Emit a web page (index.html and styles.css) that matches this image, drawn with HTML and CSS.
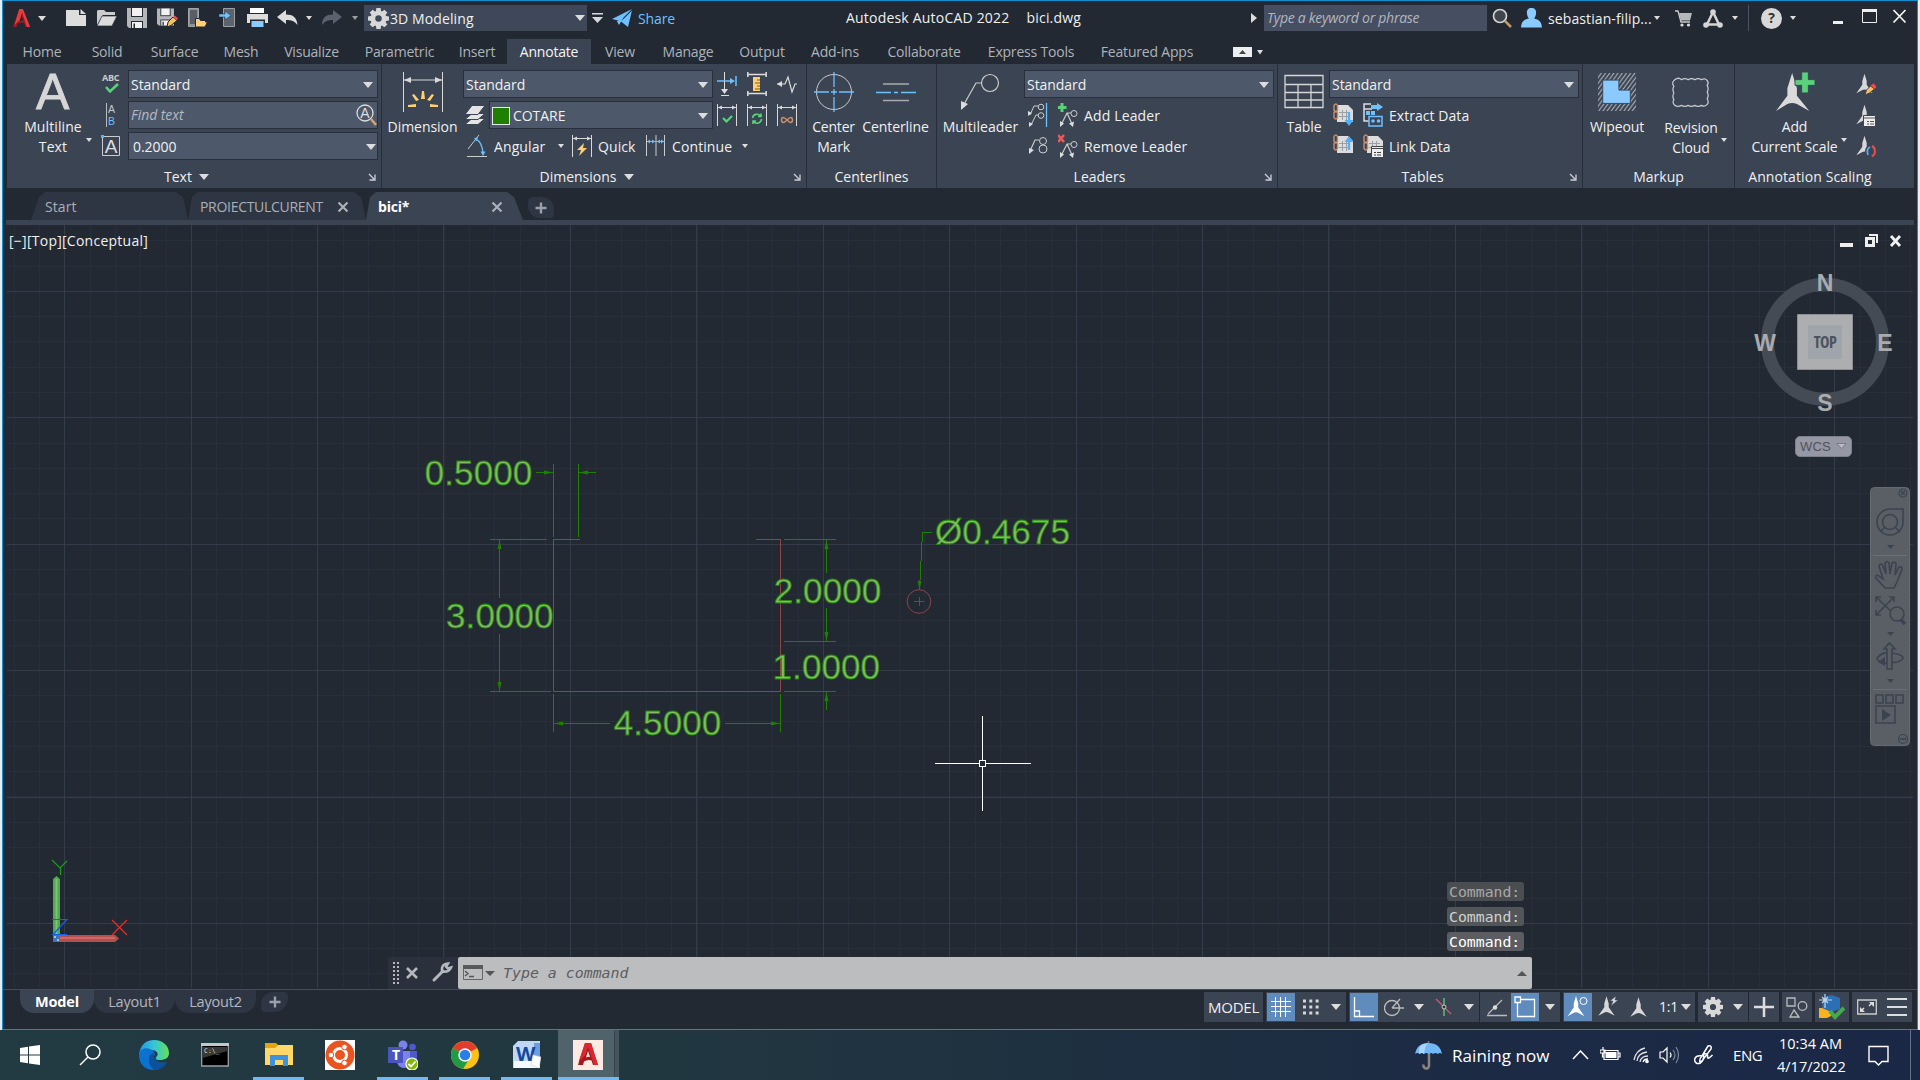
FILE: index.html
```html
<!DOCTYPE html>
<html lang="en">
<head>
<meta charset="utf-8">
<title>Autodesk AutoCAD 2022 - bici.dwg</title>
<link rel="stylesheet" href="styles.css">
</head>
<body>
<svg width="0" height="0" class="defs">
  <defs>
    <symbol id="gear" viewBox="0 0 20 20"><g fill="currentColor"><path fill-rule="evenodd" d="M10 2.5a7.5 7.5 0 1 0 0 15a7.5 7.5 0 0 0 0-15zm0 4.4a3.1 3.1 0 1 1 0 6.200a3.100 3.100 0 0 1 0-6.200z"/><path d="M8 0h4l.6 4h-5.200zM8 20h4l.6-4h-5.200zM0 8v4l4 .6v-5.200zM20 8v4l-4 .6v-5.200zM1.600 4.400l2.800-2.800l3.200 2.400l-3.600 3.600zM18.400 4.400l-2.800-2.800l-3.200 2.400l3.600 3.600zM1.600 15.600l2.800 2.800l3.200-2.400l-3.600-3.600zM18.400 15.600l-2.800 2.800l-3.200-2.400l3.600-3.600z"/></g></symbol>
    <symbol id="scale" viewBox="0 0 20 24"><path fill="currentColor" d="M10 0l2.600 8.500v4.500l7 10l-6.600-3.700c-1.800-1-4.200-1-6 0L.4 23l7-10V8.500z"/></symbol>
    <symbol id="floppy" viewBox="0 0 20 20"><path fill="#b4b6b9" d="M0 0h20v20H2l-2-2z"/><path fill="#222933" d="M4 0h12v9H4z"/><path fill="#f2f2f2" d="M5 0h10v8H5z"/><path fill="#222933" d="M4 13h12v7H4z"/><path fill="#f2f2f2" d="M5 14h10v6H5z"/><path fill="#222933" d="M6.500 15.500h1.500V20H6.500z"/></symbol>
    <symbol id="dimframe" viewBox="0 0 20 24"><path fill="none" stroke="#d8d8d8" d="M.5 1v22M19.500 1v22M1 4.500h18"/><path fill="#d8d8d8" d="M1 4.500l4-2v4zM19 4.500l-4-2v4z"/></symbol>
    <symbol id="sheet" viewBox="0 0 20 22"><path fill="#ddd" d="M4 2h11l5 5v12H4z"/><path stroke="#9aa0a6" fill="none" d="M6 9.500h11M6 13.500h11M9.500 7v10M13.500 7v10"/><path fill="none" stroke="#c98f6a" stroke-width="1.400" d="M1 2.500q2-3 3.500 0v5q-1.500 3-3.500 0zM1 9.500q2-3 3.500 0v5q-1.500 3-3.500 0z"/></symbol>
    <symbol id="launch" viewBox="0 0 8 8"><path fill="none" stroke="#ccd0d6" stroke-width="1.300" d="M1 1l5 5M7 1.500v5.500h-5.500"/></symbol>
    <symbol id="close" viewBox="0 0 12 12"><path fill="none" stroke="currentColor" stroke-width="2.200" d="M1.500 1.500l9 9M10.500 1.500l-9 9"/></symbol>
  </defs>
</svg>

<div class="app">
  <header class="titlebar">
    <div class="quick">
      <svg width="18" height="22" viewBox="0 0 20 22"><path fill="#a3191f" d="M0 21L7 1h4l8 20h-5l-1.500-4.500q-4-1.500-7.500 1L4 21z"/><path fill="#e0403f" d="M7 1h4l8 20h-3.500L10 4.500L7.500 13l-6 6z"/><path fill="#222933" d="M9.500 8l2 6q-2-.6-4 .6z"/></svg>
      <i class="caret"></i>
      <svg width="21" height="18" viewBox="0 0 21 18"><path fill="#ddd" d="M0 1h13v5h7v11H0z"/><path fill="#ddd" d="M14.500 0l5.500 5h-5.500z"/></svg>
      <svg width="21" height="18" viewBox="0 0 21 18"><path fill="#ccc" d="M0 16V2l1-1h6l2 2h9v3H6z"/><path fill="#ddd" stroke="#222933" stroke-width=".7" d="M5 7h15l-5 10H0z"/></svg>
      <svg width="20" height="20"><use href="#floppy"/></svg>
      <svg width="21" height="20" viewBox="0 0 21 20"><svg width="17" height="18"><use href="#floppy"/></svg><path fill="#f7c05e" stroke="#222933" d="M10 19l1-5l5-5l4 3.500l-6 5z"/><path fill="#ee4b4b" d="M16 9l2-1.500l3 3l-1.500 2z"/></svg>
      <svg width="19" height="20" viewBox="0 0 19 20"><path fill="#8d9198" stroke="#a0a3a8" d="M.5.5h10v18h-10z"/><path fill="#5a5e66" d="M2 2h7v14H2z"/><path fill="#ffcf78" stroke="#222933" d="M7.500 19V10.500h4l1 2h5V14h2l-2.500 5z"/></svg>
      <svg width="19" height="20" viewBox="0 0 19 20"><path fill="#5e626a" stroke="#9b9fa5" d="M4.500.5h11v18h-11z"/><path fill="#6ec1ff" stroke="#222933" stroke-width=".5" d="M0 6h6V3l6 4.500l-6 4.500V9H0z"/></svg>
      <svg width="21" height="20" viewBox="0 0 21 20"><path fill="#fff" d="M3 0h14v5H3z"/><path fill="#ddd" d="M0 6h21v9H0z"/><path fill="#222933" d="M3 11.500h15V20H3z"/><path fill="#8acaff" d="M4.500 13h12v6h-12z"/></svg>
      <svg width="21" height="16" viewBox="0 0 21 16"><path fill="#ddd" d="M0 7l9-7v4.500c7 0 11 3 11.500 10.500c-3-4-6-5-11.500-5V14z"/></svg>
      <i class="caret sm"></i>
      <svg width="21" height="16" viewBox="0 0 21 16"><path fill="#5b626d" d="M20 7L11 0v4.500C4 4.500 0 7.500 0 15c3-4 6-5 11-5v4z"/></svg>
      <i class="caret sm dim"></i>
    </div>
    <div class="workspace"><svg width="21" height="21" class="lt"><use href="#gear"/></svg><span>3D Modeling</span><i class="caret wide"></i></div>
    <div class="share"><svg width="11" height="12" viewBox="0 0 11 12"><path fill="#d5d8dc" d="M0 1h11v1.500H0zM0 5h11L5.500 11z"/></svg><svg width="21" height="18" viewBox="0 0 21 18"><path fill="#6ec1ff" d="M0 10L20 0L8 12zM9 12.500L20 1.500L16 18zM5 12.500L15 3L7 16z"/></svg><span>Share</span></div>
    <div class="doctitle"><span>Autodesk AutoCAD 2022</span><span>bici.dwg</span></div>
    <svg class="expand" width="6" height="10" viewBox="0 0 6 10"><path fill="#ddd" d="M0 0l6 5l-6 5z"/></svg>
    <div class="search">Type a keyword or phrase</div>
    <div class="account">
      <svg width="21" height="20" viewBox="0 0 21 20"><circle cx="8" cy="8" r="6.500" fill="#40444d" stroke="#d3d3d3" stroke-width="1.700"/><path stroke="#c79a63" stroke-width="2.500" d="M13 13l6 6"/></svg>
      <svg width="21" height="20" viewBox="0 0 21 20"><path fill="#8acaff" d="M10.500 0c4 0 5 3 4.500 6c-.4 2-1 3.500-2 4.500c5 1 7.500 3 8 9H0c.5-6 3-8 8-9C7 9.500 6.400 8 6 6c-.5-3 .5-6 4.500-6z"/></svg>
      <span>sebastian-filip...</span><i class="caret sm"></i>
      <svg width="17" height="17" viewBox="0 0 17 17"><path fill="none" stroke="#ccc" stroke-width="1.300" d="M0 1h3l3 11h9"/><path fill="#b5b7ba" d="M4 3h13l-2 7.500H6z"/><circle cx="7" cy="15" r="1.600" fill="#ddd"/><circle cx="13.500" cy="15" r="1.600" fill="#ddd"/></svg>
      <svg width="20" height="19" viewBox="0 0 20 19"><path fill="none" stroke="#d5d5d5" stroke-width="2.500" stroke-linejoin="round" d="M10 3L4 15.500h12z"/><circle cx="10" cy="3" r="2.800" fill="#d5d5d5"/><circle cx="3" cy="16" r="2.800" fill="#d5d5d5"/><circle cx="17" cy="16" r="2.800" fill="#d5d5d5"/></svg>
      <i class="caret sm"></i><b class="bar"></b>
      <span class="help">?</span><i class="caret sm"></i>
    </div>
    <svg class="winbtns" width="78" height="18" viewBox="0 0 78 18"><path fill="#eee" d="M0 12h10v3H0z"/><path fill="none" stroke="#eee" d="M29.500 1.500h14v12h-14z"/><path fill="#eee" d="M29 0h15v3H29z"/><path fill="none" stroke="#f2f2f2" stroke-width="1.800" d="M60.500 1l12 12.500M72.500 1l-12 12.500"/></svg>
  </header>

  <nav class="ribbontabs">
    <span>Home</span><span>Solid</span><span>Surface</span><span>Mesh</span><span>Visualize</span><span>Parametric</span><span>Insert</span><span class="on">Annotate</span><span>View</span><span>Manage</span><span>Output</span><span>Add-ins</span><span>Collaborate</span><span>Express Tools</span><span>Featured Apps</span>
    <svg width="38" height="12" viewBox="0 0 38 12"><path fill="#eceded" d="M5 1h19v10H5z"/><path fill="#444" d="M11 8l3.500-4L18 8z"/><path fill="#ddd" d="M29 4h6l-3 4.500z"/></svg>
  </nav>

  <section class="ribbon">
    <div class="panel p-text">
      <div class="work">
        <button class="big"><svg width="34" height="38" viewBox="0 0 34 38"><text x="0" y="37" class="mtext">A</text></svg><span>Multiline<br>Text</span><i class="caret sm"></i></button>
        <div class="rows">
          <div class="row"><svg width="20" height="24" viewBox="0 0 20 24"><text x="1" y="9" class="abc">ABC</text><path fill="none" stroke="#5ad27c" stroke-width="2.600" d="M5 15l4 4.500l8-7.500"/></svg><div class="combo">Standard<i class="caret wide"></i></div></div>
          <div class="row"><svg width="20" height="24" viewBox="0 0 20 24"><path stroke="#bbb" d="M5.500 0v24"/><text x="7" y="9.800" class="ab">A</text><text x="7" y="21.500" class="ab blue">B</text></svg><div class="combo find">Find text<svg width="21" height="24" viewBox="0 0 21 24"><circle cx="9" cy="10" r="8" fill="none" stroke="#ddd" stroke-width="1.300"/><path stroke="#d6a468" stroke-width="2.600" d="M15 16l5 6"/><text x="4.300" y="14.800" class="fa">A</text></svg></div></div>
          <div class="row"><svg width="20" height="24" viewBox="0 0 20 24"><path fill="none" stroke="#ccc" d="M1.500 2.500h17v19h-17z"/><path fill="#58b2ff" d="M0 1h3v3H0z"/><text x="3.700" y="18.500" class="boxa">A</text></svg><div class="combo num">0.2000<i class="caret wide"></i></div></div>
        </div>
      </div>
      <footer>Text<i class="caret wide"></i><svg width="8" height="8"><use href="#launch"/></svg></footer>
    </div>

    <div class="panel p-dim">
      <div class="work">
        <button class="big"><svg width="40" height="40" viewBox="0 0 40 40"><path fill="none" stroke="#d8d8d8" d="M.5 0v40M39.500 0v40M1 8h38"/><path fill="#d8d8d8" d="M1 8l7-3v6zM39 8l-7-3v6z"/><path fill="#ffcf70" d="M18 27l1-8h2l1 8zM13 29l-4-6l2-1l5 6zM27 29l4-6l-2-1l-5 6zM13 35H5v-2l8-1zM27 35h8v-2l-8-1z"/></svg><span>Dimension</span></button>
        <div class="rows">
          <div class="row"><div class="combo">Standard<i class="caret wide"></i></div>
            <svg width="20" height="24" viewBox="0 0 20 24"><path stroke="#ddd" d="M7.500 0v20M4 23.500h8"/><path fill="#ddd" d="M7.500 22l-3.500-5h7z"/><path stroke="#6ec1ff" stroke-width="1.500" d="M0 9h16M19 4v10"/><path fill="#6ec1ff" d="M18 9l-5-3v6z"/></svg>
            <svg width="20" height="24" viewBox="0 0 20 24"><path stroke="#ddd" stroke-width="1.500" d="M1 2.500h18M1 21.500h18M.8 0v5M19.200 0v5M.8 19v5M19.200 19v5"/><path fill="#ffcf70" d="M6 5h7v14H6z"/><path stroke="#765d2d" d="M10 8h3M8 11h5M10 14h3M8 17h5"/></svg>
            <svg width="20" height="24" viewBox="0 0 20 24"><path fill="none" stroke="#ddd" stroke-width="1.200" d="M0 12h8l3-7l4 15l3-8h2"/><path fill="#ddd" d="M0 12l5-3v6z"/></svg>
          </div>
          <div class="row"><svg class="lay" width="20" height="22" viewBox="0 0 20 22"><g fill="#e4e4e4" stroke="#3b4453"><path d="M0 20.500l7-6h13l-7 6z"/><path d="M0 15.500l7-6h13l-7 6z"/><path d="M0 10.500l7-9h13l-7 9z"/></g></svg><div class="combo layer"><b class="swatch"></b>COTARE<i class="caret wide"></i></div>
            <svg width="20" height="24" viewBox="0 0 20 24"><use href="#dimframe"/><path fill="none" stroke="#5ad27c" stroke-width="2.200" d="M6 15l3.500 3.500L15 13"/></svg>
            <svg width="20" height="24" viewBox="0 0 20 24"><use href="#dimframe"/><path fill="none" stroke="#5ad27c" stroke-width="1.600" d="M5.500 15a4.500 4.500 0 0 1 8-2M14.500 16a4.500 4.500 0 0 1-8 2.500M14 10.500v3h-3M6 21v-3h3"/></svg>
            <svg width="20" height="24" viewBox="0 0 20 24"><use href="#dimframe"/><path fill="none" stroke="#c98f6a" stroke-width="1.600" d="M10 17q-5-5-5.500 0q.5 5 5.500 0q5-5 5.500 0q-.5 5-5.500 0"/></svg>
          </div>
          <div class="row labels"><svg width="20" height="24" viewBox="0 0 20 24"><path fill="none" stroke="#ccc" d="M12 1L1 15M0 22.500h20"/><path fill="none" stroke="#6ec1ff" stroke-width="1.300" d="M9 5q6 3 7 14"/><path fill="#6ec1ff" d="M16 22l-2.500-4.500h5zM7 4l4-.5l-1.500 4z"/></svg><span>Angular</span><i class="caret sm"></i><svg width="20" height="24" viewBox="0 0 20 24"><use href="#dimframe"/><path fill="#ffcf70" d="M12 9l-7 7h4l-2 6l8-8h-4z"/></svg><span>Quick</span><svg width="20" height="24" viewBox="0 0 20 24"><path stroke="#ccc" d="M.5 1v21M10 1v21M18.500 1v21"/><path stroke="#6ec1ff" d="M1 7.500h18"/><path fill="#6ec1ff" d="M1 7.500l3-2v4zM9 7.500l-3-2v4zM11 7.500l3-2v4zM18 7.500l-3-2v4z"/></svg><span>Continue</span><i class="caret sm"></i></div>
        </div>
      </div>
      <footer>Dimensions<i class="caret wide"></i><svg width="8" height="8"><use href="#launch"/></svg></footer>
    </div>

    <div class="panel p-center">
      <div class="work">
        <button class="big"><svg width="40" height="40" viewBox="0 0 40 40"><circle cx="20" cy="20" r="17.500" fill="none" stroke="#ccc"/><path stroke="#6ec1ff" stroke-width="1.300" d="M0 20h15M17 20h6M25 20h15M20 0v15M20 17v6M20 25v15"/></svg><span>Center<br>Mark</span></button>
        <button class="big"><svg width="40" height="40" viewBox="0 0 40 40"><path stroke="#aaa" stroke-width="1.500" d="M7 12h26M7 28.500h26"/><path stroke="#6ec1ff" stroke-width="1.300" d="M0 20.500h15M18 20.500h4M25 20.500h15"/></svg><span>Centerline</span></button>
      </div>
      <footer>Centerlines</footer>
    </div>

    <div class="panel p-lead">
      <div class="work">
        <button class="big"><svg width="40" height="40" viewBox="0 0 40 40"><circle cx="30" cy="11" r="8.500" fill="none" stroke="#ccc" stroke-width="1.200"/><path fill="none" stroke="#ccc" stroke-width="1.200" d="M21 11h-5L3 34"/><path fill="#ddd" d="M1 38l0-9l7 3z"/></svg><span>Multileader</span></button>
        <div class="rows">
          <div class="row"><div class="combo">Standard<i class="caret wide"></i></div></div>
          <div class="row labels"><svg width="20" height="24" viewBox="0 0 20 24"><path fill="none" stroke="#ccc" d="M2 12l4-9h4M3 22l5-10h3"/><circle cx="13" cy="4" r="2.800" fill="none" stroke="#ccc"/><circle cx="13" cy="12.500" r="2.800" fill="none" stroke="#ccc"/><path fill="#ddd" d="M0 13V8l4 2zM1 24v-5l4 2z"/><path stroke="#6ec1ff" stroke-width="1.300" d="M18.500 0v24"/></svg><svg width="20" height="24" viewBox="0 0 20 24"><path fill="#5ad27c" d="M2.500 0h3v3h3v3h-3v3h-3V6h-3V3h3z"/><path fill="none" stroke="#ccc" stroke-width="1.200" d="M4 20l5-10h4M9 10l5 11"/><circle cx="16" cy="10.500" r="3" fill="none" stroke="#ccc"/><path fill="#ddd" d="M2 24v-6l4 2.500zM15 24l-4-3.500l5-2z"/></svg><span>Add Leader</span></div>
          <div class="row labels"><svg width="20" height="24" viewBox="0 0 20 24"><path fill="none" stroke="#ccc" stroke-width="1.200" d="M2 17L7 6h4"/><circle cx="15" cy="7" r="3.500" fill="none" stroke="#ccc"/><circle cx="15" cy="15" r="4" fill="none" stroke="#ccc"/><path fill="#ddd" d="M1 20v-6l5 2z"/></svg><svg width="20" height="24" viewBox="0 0 20 24"><path stroke="#f0585c" stroke-width="2.600" d="M0 1l6 7M6 1l-6 7"/><path fill="none" stroke="#ccc" stroke-width="1.200" d="M4 20l5-10h4M9 10l5 11"/><circle cx="16" cy="10.500" r="3" fill="none" stroke="#ccc"/><path fill="#ddd" d="M2 24v-6l4 2.500zM15 24l-4-3.500l5-2z"/></svg><span>Remove Leader</span></div>
        </div>
      </div>
      <footer>Leaders<svg width="8" height="8"><use href="#launch"/></svg></footer>
    </div>

    <div class="panel p-table">
      <div class="work">
        <button class="big"><svg width="40" height="40" viewBox="0 0 40 40"><path fill="none" stroke="#d5d5d5" stroke-width="1.300" d="M1 3.500h38v32H1zM1 12.500h38M1 20.500h38M1 28h38M14 12.500v23M27 12.500v23"/></svg><span>Table</span></button>
        <div class="rows">
          <div class="row"><div class="combo">Standard<i class="caret wide"></i></div></div>
          <div class="row labels"><svg width="20" height="24" viewBox="0 0 20 24"><svg width="20" height="22"><use href="#sheet"/></svg><path stroke="#4fb0ff" stroke-width="2.200" d="M16 9v9"/><path fill="#4fb0ff" d="M11.500 17h9L16 23z"/></svg><svg width="20" height="24" viewBox="0 0 20 24"><path fill="none" stroke="#ddd" stroke-width="1.500" d="M8 1H1v17h5M1 6h8"/><path fill="#6ec1ff" d="M3 8h4v4H3zM8 8h4v4H8zM8 2h6V0l6 4l-6 4V6H8z"/><path fill="#3b4453" stroke="#6ec1ff" stroke-width="1.500" d="M6 13.500h13v9.500H6z"/><circle cx="10" cy="18" r="1.800" fill="#6ec1ff"/><circle cx="15.500" cy="18" r="1.800" fill="#6ec1ff"/></svg><span>Extract Data</span></div>
          <div class="row labels"><svg width="20" height="24" viewBox="0 0 20 24"><svg width="20" height="22"><use href="#sheet"/></svg><path stroke="#4fb0ff" stroke-width="2.200" d="M16 7v9"/><path fill="#4fb0ff" d="M11.500 8h9L16 2z"/></svg><svg width="20" height="24" viewBox="0 0 20 24"><svg width="20" height="22"><use href="#sheet"/></svg><path fill="#eee" stroke="#3b4453" d="M8.500 12.500h12v11h-12z"/><path stroke="#444" d="M9 14.500h11M11 18.500h2M14 18.500h4M11 21h2M14 21h4"/></svg><span>Link Data</span></div>
        </div>
      </div>
      <footer>Tables<svg width="8" height="8"><use href="#launch"/></svg></footer>
    </div>

    <div class="panel p-mark">
      <div class="work">
        <button class="big"><svg width="40" height="42" viewBox="0 0 40 42"><defs><pattern id="hatch" width="4.400" height="6" patternUnits="userSpaceOnUse"><path stroke="#c5c9cf" d="M0 6L4.400 0M-2.200 3L2.200-3M2.200 9L6.600 3"/></pattern></defs><path fill="url(#hatch)" d="M0 1h40v40H0z"/><path fill="#8acaff" stroke="#3b4453" d="M5 8.500h17V19h12v14H5z"/></svg><span>Wipeout</span></button>
        <button class="big rev"><svg width="42" height="42" viewBox="0 0 42 42"><path fill="none" stroke="#c8cbd0" stroke-width="1.300" d="M4 7q4-3 7 0q3.500-2 7 0q3.500-2 7 0q3.500-2 7 0q4-2 6 1q2 3 0 5q2 4 0 7q2 4 0 7q2 4 0 6q-3 3-6 1q-3.500 2-7 0q-3.500 2-7 0q-3.500 2-7 0q-4 2-7 0q-3-3-1-6q-2-4 0-7q-2-4 0-7q-3-4 1-7z"/></svg><span>Revision<br>Cloud</span><i class="caret sm"></i></button>
      </div>
      <footer>Markup</footer>
    </div>

    <div class="panel p-anno">
      <div class="work">
        <button class="big"><svg width="42" height="42" viewBox="0 0 42 42"><path fill="#dadada" d="M18 1l5 16v8l13 16l-13-7.500q-5-2-10 0L1 41l12-16v-8z"/><path fill="#5ad27c" stroke="#3b4453" d="M28 0h7v8h7v6h-7v8h-7v-8h-7V8h7z"/></svg><span>Add<br>Current Scale</span><i class="caret sm"></i></button>
        <div class="rows">
          <div class="row"><svg width="20" height="24" viewBox="0 0 20 24"><svg width="17" height="24" class="lt"><use href="#scale"/></svg><path fill="#f7c05e" stroke="#3b4453" d="M9 23l1.500-5l4-4l4 3l-5 4z"/><path fill="#ee4b4b" d="M14.500 13.500l3-2l3 3l-2 2.500z"/></svg></div>
          <div class="row"><svg width="20" height="24" viewBox="0 0 20 24"><svg width="17" height="24" class="lt"><use href="#scale"/></svg><path fill="#eee" stroke="#3b4453" d="M7.500 12.500h12v11h-12z"/><path stroke="#555" d="M8 15h11M11 18.500h2M14 18.500h4M11 21h2M14 21h4"/></svg></div>
          <div class="row"><svg width="20" height="24" viewBox="0 0 20 24"><svg width="17" height="24" class="lt"><use href="#scale"/></svg><circle cx="15" cy="17" r="6" fill="#3b4453"/><path fill="none" stroke="#4fb0ff" stroke-width="1.800" d="M14 13q-4 2-2 8"/><path fill="none" stroke="#ee4b4b" stroke-width="2" d="M16 12q4 2 2.500 8l-2.500 2.500"/></svg></div>
        </div>
      </div>
      <footer>Annotation Scaling</footer>
    </div>
  </section>

  <nav class="filetabs">
    <div class="ft start">Start</div>
    <div class="ft proj">PROIECTULCURENT<svg width="12" height="12"><use href="#close"/></svg></div>
    <div class="ft cur">bici*<svg width="12" height="12"><use href="#close"/></svg></div>
    <div class="ft add"><svg width="12" height="12" viewBox="0 0 12 12"><path stroke="#9aa0a9" stroke-width="2.400" d="M6 .5v11M.5 6h11"/></svg></div>
  </nav>

  <main class="canvas">
    <svg class="drawing" width="1914" height="765" viewBox="3 225 1914 765">
      <g class="grid">
        <path class="minor" stroke-width="763" d="M13.900 606.500H1912" stroke-dasharray="1 24.286"/>
        <path class="minor" stroke-width="1906" d="M959.500 240.300V988" stroke-dasharray="1 24.280"/>
        <path class="major" stroke-width="763" d="M64.100 606.500H1912" stroke-dasharray="1 125.430"/>
        <path class="major" stroke-width="1906" d="M959.500 291V988" stroke-dasharray="1 125.400"/>
      </g>
      <g class="part"><path d="M580 539.500H553.500V691.500H780.500V539.500H756"/><circle cx="919" cy="601.500" r="11.800"/></g>
      <g class="dimline">
        <path d="M553.500 464v73M578.500 464v73M536 472.500h17.500M578.500 472.500H596M490 539.500h57M490 691.500h61M499.500 539.500V597.500M499.500 633.500v58M784 539.500h52M784 641.500h52M784 691.500h52M826.500 539.500V573M826.500 608v33.500M826.500 691.500V710M553.500 694v38M780.500 694v38M553.500 723.500H610M725 723.500h55.500M932 532.500h-9.500L919.500 590M914 601.500h10M919.500 597v9"/>
        <path class="head" d="M553 472.500l-9-2v4zM579 472.500l9-2v4zM499.500 540l-2 9h4zM499.500 691l-2-9h4zM826.500 540l-2 9h4zM826.500 641l-2-9h4zM826.500 692l-2 9h4zM554 723.500l9-2v4zM780 723.500l-9-2v4zM919.500 590l-2-9h4z"/>
      </g>
      <g class="dimtext"><text x="424.700" y="484.500">0.5000</text><text x="446" y="627.500">3.0000</text><text x="773.700" y="602.500">2.0000</text><text x="772.500" y="678.500">1.0000</text><text x="613.700" y="735">4.5000</text><text x="935" y="544">Ø0.4675</text></g>
      <g class="cursor"><path d="M935 763.500h44M986 763.500h45M982.500 716v44M982.500 767v44M979.500 760.500h6v6h-6z"/></g>
      <g class="ucs">
        <path fill="#56a552" d="M53 879l3.500-3l3.500 3v58h-7z"/><path fill="#79c474" d="M55.500 879h2v57h-2z"/><path fill="#b44f4e" d="M59 935h56l4 3.500l-4 3.500H59z"/><path fill="#cc6966" d="M60 937h55v2H60z"/><path fill="#3d73b8" d="M53 935h7v7h-7z"/><path fill="#9cc3ee" d="M54 936h2v2h-2zM57 939h2v2h-2z"/>
        <path class="ay" d="M52 860l8 8l7-7M60.500 868v7"/><path class="ax" d="M112 920l15 15M127 920l-15 15"/><path class="az" d="M52 919.500h15L53 934.500h14"/>
      </g>
    </svg>
    <span class="viewlabel">[−][Top][Conceptual]</span>
    <svg class="docbtns" width="66" height="18" viewBox="0 0 66 18"><path fill="#eee" d="M1 11h13v4H1z"/><path fill="none" stroke="#eee" stroke-width="2" d="M30 3h8v8"/><path fill="none" stroke="#eee" stroke-width="3" d="M27.500 6.500h7v7h-7z"/><path stroke="#f2f2f2" stroke-width="2.800" d="M52 4l9 10M61 4l-9 10"/></svg>
    <svg class="cube" width="150" height="180" viewBox="1750 270 150 180">
      <circle cx="1825" cy="341.700" r="57.500" fill="none" stroke="#454b54" stroke-width="13"/>
      <path fill="#adaeb0" stroke="#8c8e91" d="M1797.500 314.500h55v55h-55z"/><path fill="#9fa5aa" d="M1808 325h34v34h-34z"/>
      <g class="dirs"><text x="1825" y="291">N</text><text x="1825" y="411">S</text><text x="1765" y="351">W</text><text x="1885" y="351">E</text></g><text x="1825" y="348" class="top">TOP</text>
    </svg>
    <div class="wcs">WCS<svg width="11" height="7" viewBox="0 0 11 7"><path fill="#b9b9c4" stroke="#777a88" d="M.8.5h9.400L5.500 5.500z"/></svg></div>
    <svg class="navbar" width="40" height="259" viewBox="0 0 40 259"><rect x=".5" y=".5" width="39" height="258" rx="4" fill="#5a5f65" stroke="#656a70"/>
      <g fill="none" stroke="#3c4350" stroke-width="1.600"><circle cx="33" cy="6" r="4" stroke-width="1.200"/><path stroke-width="1.200" d="M31 4l4 4M35 4l-4 4"/><path d="M20 22h13v13a13 13 0 1 1-13-13z"/><circle cx="20" cy="35" r="7.500"/><path d="M11 44l4-4M25 40l5 5"/><path d="M15 101l-9-10q-1-4 3-2l4 3l-4-13q2-4 4 0l3 8l-1-11q2-3 4 0l1 11l2-11q3-2 4 1l-1 11l4-8q3-1 3 2l-5 13l-3 6z"/><path d="M6 110l18 17M24 110L6 128M6 115v-5h5M19 110h5v5M6 123v5h5"/><circle cx="27" cy="127" r="7" fill="#5a5f65"/><path stroke-width="3.500" d="M31 133l4 4"/><path d="M15 177q-8-3-8-6q5-6 12-5q14 1 14 5q-2 5-18 5"/><path fill="#5a5f65" d="M17 182v-20h-3l5.500-6l5.500 6h-3v20z"/><path d="M6 208h7v8H6zM16 208h7v8h-7zM26 208h7v8h-7zM6 219h19v17H6z"/><circle cx="33" cy="252" r="4.500" stroke-width="1.200"/><path d="M30 252h6"/></g>
      <path fill="#3c4350" d="M17 58h7l-3.500 4zM17 145h7l-3.500 4zM17 192h7l-3.500 4zM8 175l7-5v9zM12 222l9 6l-9 6z"/><path stroke="#6b7076" d="M3 68.500h34M3 202.500h34"/></svg>
    <div class="history"><span>Command:</span><span>Command:</span><span>Command:</span></div>
    <div class="cmdline">
      <div class="grip"><svg width="70" height="32" viewBox="0 0 70 32"><path stroke="#b5b8bd" stroke-width="2" stroke-dasharray="2 2" d="M6 5v22M10 5v22"/><path stroke="#b5b8bd" stroke-width="2.600" d="M19 11l10 10M29 11L19 21"/><path fill="none" stroke="#b5b8bd" stroke-width="3" stroke-linecap="round" d="M46 23l9-9"/><path fill="none" stroke="#b5b8bd" stroke-width="2.500" d="M60 6.500q-7 0-6 8q7 1 9-4l-3 1l-2-2z"/></svg></div>
      <div class="input"><svg width="20" height="16" viewBox="0 0 20 16"><path fill="none" stroke="#666" d="M.5.500h19v14H.5z"/><path fill="#595959" d="M0 0h20v4H0z"/><path fill="none" stroke="#555" stroke-width="1.300" d="M2 6l3 2.500L2 11M6 11.500h5"/></svg><i class="caret dark"></i><span>Type a command</span><i class="up"></i></div>
    </div>
  </main>

  <footer class="bottom">
    <div class="layouts"><span class="on">Model</span><span>Layout1</span><span>Layout2</span><b><svg width="12" height="12" viewBox="0 0 12 12"><path stroke="#9aa0a9" stroke-width="2.400" d="M6 .5v11M.5 6h11"/></svg></b></div>
    <div class="status">
      <div class="g g1">MODEL</div>
      <div class="g g2"><b class="on"><svg width="20" height="20" viewBox="0 0 20 20"><path stroke="#fff" d="M4.500 0v20M9.500 0v20M14.500 0v20M0 4.500h20M0 9.500h20M0 14.500h20"/></svg></b><b><svg width="16" height="16" viewBox="0 0 16 16"><path stroke="#d5d5d5" stroke-width="3" stroke-dasharray="3 3.300" d="M0 2h16M0 8h16M0 14h16"/></svg></b><i class="caret wide"></i></div>
      <div class="g g3"><b class="on"><svg width="22" height="22" viewBox="0 0 22 22"><path fill="none" stroke="#fff" stroke-width="1.300" d="M1.500 1v19.500H21M1.500 15h5v5"/></svg></b><b><svg width="20" height="20" viewBox="0 0 20 20"><circle cx="8" cy="11" r="7.500" fill="none" stroke="#bbb" stroke-width="1.300"/><path stroke="#bbb" stroke-width="1.300" d="M8 11h12M8 11l8-9"/></svg></b><i class="caret wide"></i><b><svg width="20" height="20" viewBox="0 0 20 20"><path stroke="#c06070" stroke-width="1.300" d="M2 2l15 15"/><path stroke="#5ad27c" stroke-width="1.300" d="M10 1v18"/><circle cx="10" cy="10" r="2" fill="#333" stroke="#ccc"/></svg></b><i class="caret wide"></i></div>
      <div class="g g4"><b><svg width="20" height="20" viewBox="0 0 20 20"><path stroke="#bbb" stroke-width="1.300" d="M0 18.500h20M1 17L15 3"/><circle cx="8" cy="10.500" r="2.200" fill="#ddd"/></svg></b><b class="on"><svg width="22" height="22" viewBox="0 0 22 22"><path fill="none" stroke="#fff" stroke-width="1.300" d="M3.500 3.500h17v17h-17z"/><path fill="#608bbd" stroke="#fff" stroke-width="1.300" d="M1 1h5.500v5.500H1z"/></svg></b><i class="caret wide"></i></div>
      <div class="g g5"><b class="on"><svg width="22" height="22" viewBox="0 0 22 22"><svg width="18" height="21" class="wt"><use href="#scale"/></svg><circle cx="16.500" cy="5" r="3.500" fill="#608bbd" stroke="#fff"/></svg></b><b><svg width="20" height="22" viewBox="0 0 20 22" class="lt"><svg width="17" height="21"><use href="#scale"/></svg><path fill="#ddd" stroke="#3b4453" stroke-width=".5" d="M18 0l-6 5h3l-2 5l7-6h-3z"/></svg></b><b><svg width="17" height="21" class="lt"><use href="#scale"/></svg></b><span>1:1</span><i class="caret wide"></i></div>
      <div class="g g6"><svg width="20" height="20" class="lt"><use href="#gear"/></svg><i class="caret wide"></i></div>
      <div class="g g7"><svg width="20" height="20" viewBox="0 0 20 20"><path stroke="#ddd" stroke-width="2.500" d="M10 0v20M0 10h20"/></svg></div>
      <div class="g g8"><svg width="22" height="22" viewBox="0 0 22 22"><g fill="none" stroke="#bbb" stroke-width="1.300"><path d="M1 2h8v8H1zM8 14l5 7H4z"/><circle cx="16.500" cy="10" r="4.300"/></g></svg></div>
      <div class="g g9"><svg width="26" height="26" viewBox="0 0 26 26"><path fill="#f8b31e" d="M0 14h12v8l-4 2H0z"/><path fill="#2c6fb5" d="M5 3l8-2l8 3v11l-9 3L3 14z"/><path stroke="#b9d7f2" stroke-width="1.200" d="M6 0v14M0 6h13M3 3l6 6M9 3L3 9"/><path fill="none" stroke="#43ab4b" stroke-width="4" d="M11 17l5 6l9-9"/></svg></div>
      <div class="g g10"><svg width="20" height="16" viewBox="0 0 20 16"><path fill="none" stroke="#ccc" stroke-width="1.300" d="M.7 1h18.600v14H.7z"/><path fill="#ddd" d="M12 3h5v5zM3 8v5h5z"/><path stroke="#ddd" stroke-width="1.500" d="M12 7l3-3M4 12l3-3"/></svg><svg width="20" height="18" viewBox="0 0 20 18"><path stroke="#ddd" stroke-width="2" d="M0 1h20M0 9h20M0 17h20"/></svg></div>
    </div>
  </footer>
</div>

<div class="taskbar">
  <div class="task"><svg width="20" height="20" viewBox="0 0 20 20"><path fill="#fff" d="M0 3l8-1.200V9.500H0zM9 1.600L20 0v9.500H9zM0 10.500h8v7.700L0 17zM9 10.500h11V20L9 18.400z"/></svg></div>
  <div class="task"><svg width="22" height="22" viewBox="0 0 22 22"><circle cx="14" cy="8" r="7" fill="none" stroke="#fff" stroke-width="1.500"/><path stroke="#fff" stroke-width="1.500" d="M9 13l-8 8"/></svg></div>
  <div class="task"><svg width="30" height="30" viewBox="0 0 30 30"><defs><linearGradient id="eg" x1="0" x2="1"><stop offset="0" stop-color="#2396e5"/><stop offset=".5" stop-color="#35c5d9"/><stop offset="1" stop-color="#66e052"/></linearGradient></defs><path fill="url(#eg)" d="M0 15C1 5 7 0 15 0c9 0 15 6 15 13c0 5-4 7-9 7c-5 0-5-2-3-4c2-3-1-6-6-6z"/><path fill="#0b72d0" d="M0 14c1-6 9-8 14-3q2 2 2 4q-5 2-1 8q4 5 11 1q-5 6-11 6C5 30-.5 23 0 14z"/><path fill="#0c519c" d="M10 20q-1-6 5-7q-1 3 1 6q4 5 12 3q-4 8-13 8q-5-4-5-10z"/></svg></div>
  <div class="task"><svg width="28" height="24" viewBox="0 0 28 24"><path fill="#000" stroke="#99a0a4" stroke-width="1.300" d="M.7 1.500h26.600v21.500H.7z"/><path fill="#c4c8ca" d="M0 0h28v3H0z"/><path fill="#383838" d="M1.500 4h25v4L1.500 15z"/><text x="3" y="9.500" class="prompt">C:\_</text></svg></div>
  <div class="task run"><svg width="28" height="24" viewBox="0 0 28 24"><path fill="#e4a50c" d="M0 0h11l3 3v5H0z"/><path fill="#ffd869" d="M0 5h10l3-3h15v20H0z"/><path fill="#3c92dc" d="M5 12h18v11h-5v-6H10v6H5z"/></svg></div>
  <div class="task"><svg width="30" height="30" viewBox="0 0 30 30"><path fill="#fff" d="M0 0h30v30H0z"/><circle cx="15" cy="15" r="14.500" fill="#e95420"/><circle cx="15" cy="15" r="6.500" fill="none" stroke="#fff" stroke-width="3"/><g fill="#fff" stroke="#e95420"><circle cx="6" cy="15" r="2.800"/><circle cx="19.500" cy="7" r="2.800"/><circle cx="19.500" cy="23" r="2.800"/></g></svg></div>
  <div class="task run"><svg width="30" height="30" viewBox="0 0 30 30"><circle cx="15" cy="5" r="4.500" fill="#7b83eb"/><circle cx="24.500" cy="7" r="3.300" fill="#5059c9"/><path fill="#5059c9" d="M19 11h10v9q-2 5-8 4z"/><path fill="#7b83eb" d="M9 11h13v11q-1 6-7 6q-5-1-6-6z"/><path fill="#4b53bc" d="M0 7h15v16H0z"/><text x="4" y="20" class="teamt">T</text><circle cx="24" cy="24" r="6" fill="#7fba00" stroke="#fff" stroke-width="1.200"/><path fill="none" stroke="#fff" stroke-width="1.800" d="M20.500 24l2.500 2.500l4.500-5"/></svg></div>
  <div class="task run"><svg width="28" height="28" viewBox="0 0 28 28"><circle cx="14" cy="14" r="14" fill="#fbc116"/><path fill="#e33b2e" d="M14 14L1.900 7A14 14 0 0 1 26.100 7z"/><path fill="#229a45" d="M1.900 7L14 14l3 6L12 27.900A14 14 0 0 1 1.900 7z"/><circle cx="14" cy="14" r="6.700" fill="#fff"/><circle cx="14" cy="14" r="5.300" fill="#2b7de9"/></svg></div>
  <div class="task run"><svg width="28" height="28" viewBox="0 0 28 28"><path fill="#bfd6f5" d="M5 0h22v27H0V5z"/><path fill="#6f9be0" d="M21 2h6v14h-6z"/><path fill="#f4f8ff" d="M1 20h26v7H1z"/><text x="3" y="20" class="wordt">W</text><path fill="#fff" stroke="#c6d2e8" stroke-width=".6" d="M20 14l8 2l-2 11l-8-3z"/></svg></div>
  <div class="task run active"><svg width="30" height="30" viewBox="0 0 30 30"><path fill="#fdebe3" d="M0 0h30v30H0z"/><path fill="#a3191f" d="M5 25L12 3h6l7 22h-5l-1.500-4.500q-4-1.500-7.500 1L10 25z"/><path fill="#d9282f" d="M12 3h6l7 22h-4L15 7l-2.500 8l-7 7z"/><path fill="#fdebe3" d="M15 11l2 6q-2-.6-4 .6z"/></svg></div>
  <div class="tray">
    <svg width="27" height="29" viewBox="0 0 27 29"><path stroke="#777" stroke-width="1.500" d="M13.500 0v4"/><path fill="none" stroke="#8a8380" stroke-width="2.500" d="M14 12v13q-1 3-3 2.500q-3-.5-2.500-4"/><path fill="#70b8f8" d="M0 13Q2 2 13.500 2Q25 2 27 13q-2-2-4.500 0q-2-2-4.500 0q-2-2-4.500 0q-2-2-4.500 0q-2-2-4.500 0Q2 11 0 13z"/><path fill="#a9d6ff" d="M9 13Q10 4 13.500 2Q2 3 4.500 13q2.500-2 4.500 0z"/></svg>
    <span class="weather">Raining now</span>
    <svg width="17" height="10" viewBox="0 0 17 10"><path fill="none" stroke="#fff" stroke-width="1.500" d="M1 9l7.500-8L16 9"/></svg>
    <svg width="21" height="16" viewBox="0 0 21 16"><path fill="none" stroke="#fff" stroke-width="1.200" d="M4 3.500h14v9H4zM18.500 6h1.500v4h-1.500M3 0v3M0 3h5v3H0zM2.500 6v4h2"/><path fill="#fff" d="M5.500 5h11v6h-11z"/></svg>
    <svg width="17" height="18" viewBox="0 0 17 18"><g fill="none" stroke="#fff" stroke-width="1.300"><path d="M7 16q1-6 8-6M4 15Q5 7 14 6M1 14Q3 4 12 2" opacity=".85"/><path d="M10 16q1-3 5-3"/></g><circle cx="14" cy="15.500" r="1.800" fill="#fff"/></svg>
    <svg width="21" height="18" viewBox="0 0 21 18"><path fill="none" stroke="#fff" stroke-width="1.200" d="M1 6h3l4-4v14l-4-4H1zM11 6.500q2 2.500 0 5"/><path fill="none" stroke="#7a879c" stroke-width="1.200" d="M14 4q4 5 0 10M17 1q5 8 0 16"/></svg>
    <svg width="20" height="20" viewBox="0 0 20 20"><path fill="none" stroke="#fff" stroke-width="1.500" d="M8 11L14 1q4-1 3 3L8 16l-2 1q-1-3 2-6zM8 11q-7-1-7.500 4q1 5 6 3q4-3 3-9q5-1 4 3q0 3 5-2"/></svg>
    <span class="lang">ENG</span>
    <span class="clock">10:34 AM<br>4/17/2022</span>
    <svg width="21" height="21" viewBox="0 0 21 21"><path fill="none" stroke="#fff" stroke-width="1.400" d="M1 1.500h19v15h-6L10.500 20L7 16.500H1z"/></svg>
    <b class="peek"></b>
  </div>
</div>
</body>
</html>
```
FILE: styles.css
```css
* { box-sizing: border-box; }
body { margin: 0; width: 1920px; height: 1080px; overflow: hidden; background: #e9edf0; font: 14px/20px "Open Sans", "Noto Sans", sans-serif; letter-spacing: -0.2px; color: #f0f0f0; }
svg { display: block; flex: none; }
.defs { position: absolute; }
.lt { color: #d8d8d8; }
.wt { color: #fff; }
.app { width: 1916px; height: 1030px; margin-left: 2px; border: 1px solid #0f8fd0; background: #222933; display: flex; flex-direction: column; }
.caret { display: inline-block; flex: none; width: 0; height: 0; border: 4px solid transparent; border-top: 5px solid #ddd; border-bottom: 0; }
.caret.sm { border-width: 4px 3px 0; }
.caret.wide { border-width: 6px 5px 0; }
.caret.dim { border-top-color: #9a9ea5; }
.caret.dark { border-width: 5px 5px 0; border-top-color: #555; }

/* title bar */
.titlebar { height: 38px; display: grid; grid-template-columns: 361px 223px 256px 402px 13px 229px 346px 1fr; flex: none; }
.quick { display: grid; grid-template-columns: 25px 28px 31px 30px 30px 31px 31px 28px 30px 29px 16px 30px 10px; padding-left: 10px; align-items: center; height: 34px; }
.workspace { margin-top: 4px; height: 26px; background: #3e4859; display: flex; align-items: center; padding: 0 2px 0 4px; }
.workspace span { margin-left: 1px; flex: 1; letter-spacing: .1px; padding-top: 1px; }
.share { display: flex; align-items: center; height: 34px; color: #6ec1ff; padding-left: 5px; gap: 6px; }
.share span { padding-top: 1px; margin-left: -1px; letter-spacing: -.1px; }
.share svg:first-child { margin-right: 3px; }
.doctitle { height: 33px; display: flex; align-items: center; gap: 17px; padding-left: 3px; letter-spacing: .2px; }
.expand { margin: 12px 0 0 6px; }
.search { margin: 4px 0 0 6px; width: 223px; height: 26px; line-height: 25px; padding-left: 3px; background: #464f62; color: #b2b6bf; font-style: italic; letter-spacing: -.27px; white-space: nowrap; }
.account { display: grid; grid-template-columns: 29px 27px 106px 21px 28px 29px 16px 13px 29px 10px; align-items: center; height: 34px; padding-left: 5px; letter-spacing: .1px; }
.account > span:nth-child(3) { padding-top: 1px; }
.bar { width: 1px; height: 26px; background: #4c5361; }
.help { width: 21px; height: 21px; border-radius: 50%; background: #d8d8d8; color: #333; font-weight: 700; text-align: center; letter-spacing: 0; }
.winbtns { margin-top: 8px; }

/* ribbon tabs */
.ribbontabs { height: 25px; flex: none; display: grid; grid-template-columns: 68px 62px 73px 60px 81px 95px 60px 84px 58px 78px 70px 76px 102px 112px 120px 60px; padding-left: 5px; color: #aeb3ba; text-align: center; line-height: 26px; }
.ribbontabs .on { background: #3b4453; color: #f4f4f4; }
.ribbontabs svg { margin: 7px 0 0 21px; }

/* ribbon */
.ribbon { margin: 0 3px 0 4px; height: 124px; flex: none; background: #3b4453; display: flex; }
.panel { border-right: 1px solid #272e39; flex: none; display: flex; flex-direction: column; }
.panel:last-child { border: 0; }
.p-text { width: 375px; } .p-dim { width: 425px; } .p-center { width: 130px; } .p-lead { width: 341px; }
.p-table { width: 305px; } .p-mark { width: 152px; } .p-anno { width: 178px; }
.work { height: 101px; display: flex; }
.panel footer { height: 23px; display: flex; align-items: center; justify-content: center; gap: 7px; position: relative; letter-spacing: 0; }
.p-text footer, .p-dim footer, .p-lead footer, .p-table footer { padding-right: 15px; }
.panel footer svg { position: absolute; right: 5px; top: 8px; }
.big { border: 0; background: none; color: inherit; font: inherit; letter-spacing: 0; padding: 8px 0 0; display: flex; flex-direction: column; align-items: center; text-align: center; flex: none; position: relative; white-space: nowrap; }
.big svg { height: 40px; }
.big span { margin-top: 5px; }
.big .caret { position: absolute; right: 2px; top: 74px; }
.rows { padding-top: 6px; display: flex; flex-direction: column; gap: 3px; }
.row { height: 28px; display: flex; align-items: center; }
.combo { height: 28px; width: 250px; border: 1px solid #29303c; background: #4d586b; display: flex; align-items: center; justify-content: space-between; padding: 1px 4px 0 2px; letter-spacing: -.05px; }
.find { font-style: italic; color: #b4bac4; padding-right: 0; padding-top: 0; }
.num { padding-right: 1px; padding-left: 4px; }
.p-text .big { width: 92px; letter-spacing: .1px; }
.p-text .big svg { height: 38px; margin-bottom: 2px; overflow: visible; }
.p-text .big .caret { right: 7px; }
.p-text .row > svg { margin: 0 7px 0 2px; }
.mtext { font: 50px "Liberation Sans", Arial, sans-serif; fill: #d6d6d6; stroke: #d6d6d6; stroke-width: .8px; letter-spacing: 0; }
.abc { font: 700 9px "Open Sans", sans-serif; fill: #ccc; letter-spacing: -.2px; }
.ab { font: 10.5px "Liberation Sans", Arial, sans-serif; fill: #c4c6ca; letter-spacing: 0; } .ab.blue { fill: #6ec1ff; }
.fa { font: 14px "Liberation Sans", Arial, sans-serif; fill: #ddd; letter-spacing: 0; }
.boxa { font: 19px "Liberation Sans", Arial, sans-serif; fill: #ddd; letter-spacing: 0; }
.prompt { font: 6.5px "DejaVu Sans Mono", monospace; fill: #ddd; letter-spacing: 0; }
.p-dim .big { width: 81px; letter-spacing: -.05px; padding-right: 0; }
.p-dim .row > svg { margin-left: 4px; margin-right: 6px; }
.p-dim .row > svg.lay { margin: 0 4px 0 2px; }
.p-dim .row > svg:last-child { margin-right: 0; }
.layer { width: 224px; }
.swatch { width: 18px; height: 18px; background: #1f7f00; border: 1px solid #e8e8e8; margin-right: 3px; }
.layer .caret { margin-left: auto; }
.labels > span { padding-top: 1px; }
.p-dim .row.labels { display: grid; grid-template-columns: 27px 64px 14px 26px 48px 26px 70px 10px; padding-left: 4px; letter-spacing: .1px; }
.p-dim .row.labels svg { margin: 0; }
.p-center .big { width: 53px; letter-spacing: -.2px; } .p-center .big + .big { width: 71px; letter-spacing: -.1px; }
.p-lead .big { width: 87px; padding-right: 0; letter-spacing: .1px; }
.p-lead .big svg { margin-right: 2px; }
.p-lead .labels, .p-table .labels { display: grid; grid-template-columns: 30px 26px auto; padding-left: 4px; justify-content: start; letter-spacing: .15px; }
.p-table .labels { letter-spacing: .05px; }
.p-table .big { width: 51px; padding-left: 1px; letter-spacing: -.1px; }
.p-mark .big { width: 68px; } .p-mark .rev { width: 82px; margin-left: -1px; }
.p-mark .big span { letter-spacing: -.1px; }
.p-mark .big.rev { padding: 9px 0 0; }
.p-mark .rev .caret { right: 5px; }
.p-anno .big { width: 119px; letter-spacing: -.1px; } .p-anno .big .caret { right: 7px; }
.p-anno .rows { padding-left: 2px; }
.p-anno footer { padding-right: 28px; letter-spacing: .1px; white-space: nowrap; }

/* drawing tabs */
.filetabs { height: 37px; flex: none; padding: 4px 0 0 25px; margin: 0 3px; border-bottom: 5px solid #3b4453; display: flex; color: #aab0b8; }
.ft { height: 28px; background: #2f3643; display: flex; align-items: center; justify-content: space-between; border-radius: 12px 14px 0 0; line-height: 28px; flex: none; padding-top: 2px; }
.start { width: 157px; padding-left: 14px; letter-spacing: .1px; clip-path: polygon(0 100%, 8px 5px, 14px 0, calc(100% - 12px) 0, calc(100% - 5px) 5px, 100% 100%); }
.proj { width: 178px; padding-left: 12px; padding-right: 17px; letter-spacing: -.3px; clip-path: polygon(0 100%, 4px 5px, 10px 0, calc(100% - 12px) 0, calc(100% - 5px) 5px, 100% 100%); }
.cur { width: 157px; background: #3b4453; color: #fff; font-weight: 700; padding-left: 12px; padding-right: 20px; border-radius: 8px 14px 0 0; clip-path: polygon(0 100%, 4px 5px, 10px 0, calc(100% - 16px) 0, calc(100% - 9px) 5px, 100% 100%); }
.cur svg, .proj svg { color: #aab0b8; }
.add { width: 26px; margin: 5px 0 0 5px; height: 21px; justify-content: center; border-radius: 5px 12px 4px 12px; padding: 0; }

/* drawing area */
.canvas { position: relative; height: 765px; flex: none; border-bottom: 1px solid #454c58; overflow: hidden; }
.drawing { position: absolute; left: 0; top: 0; }
.grid path, .part path, .dimline path, .cursor path { fill: none; shape-rendering: crispEdges; }
.minor { stroke: #282f3b; } .major { stroke: #343b4b; }
.part { stroke: #8a4547; fill: none; }
.dimline { stroke: #1f7f00; }
.dimline path.head { fill: #1f7f00; stroke: none; shape-rendering: auto; }
.dimtext { font: 35px "Liberation Sans", Arial, sans-serif; fill: #82bd62; stroke: #238506; stroke-width: .8px; letter-spacing: .1px; }
.cursor { stroke: #fff; }
.ucs { stroke-width: 1.2; } .ay { stroke: #18a018; fill: none; } .ax { stroke: #e03030; fill: none; } .az { stroke: #1060e8; fill: none; }
.viewlabel { position: absolute; left: 6px; top: 6px; letter-spacing: .25px; }
.docbtns { position: absolute; left: 1836px; top: 7px; }
.cube { position: absolute; left: 1747px; top: 45px; }
.dirs { font: 700 23px "Liberation Sans", sans-serif; fill: #a9abae; text-anchor: middle; letter-spacing: 0; }
.top { font: 700 16px "Open Sans", sans-serif; fill: #4d535c; text-anchor: middle; letter-spacing: -.5px; font-stretch: condensed; }
.wcs { position: absolute; left: 1792px; top: 211px; width: 57px; height: 21px; border-radius: 5px; background: #9597a4; border: 1px solid #7d808e; color: #4f525e; font: 13px/19px "Liberation Sans", sans-serif; letter-spacing: .2px; padding: 0 4px; display: flex; align-items: center; justify-content: space-between; }
.navbar { position: absolute; left: 1867px; top: 262px; }
.history { position: absolute; left: 1444px; top: 657px; display: flex; flex-direction: column; gap: 6px; font: 14.8px/19px "DejaVu Sans Mono", monospace; letter-spacing: 0; }
.history span { width: 77px; height: 19px; background: #5b5d60; border-radius: 3px; padding-left: 2px; color: #fff; }
.history span:nth-child(1) { background: #4b4e50; color: #a8a8a8; } .history span:nth-child(2) { background: #535658; color: #d0d0d0; }
.cmdline { position: absolute; left: 385px; top: 732px; display: flex; height: 32px; width: 1144px; }
.grip { width: 70px; background: #2b303d; }
.input { flex: 1; background: #bcbdbf; border-radius: 2px; display: flex; align-items: center; color: #5c5d60; font: italic 14.9px "DejaVu Sans Mono", monospace; letter-spacing: 0; padding: 0 5px; }
.input svg { margin-right: 2px; }
.input span { margin-left: 8px; flex: 1; }
.up { border: 5px solid transparent; border-bottom-color: #555; border-top: 0; }

/* layout tabs and status bar */
.bottom { flex: 1; display: flex; justify-content: space-between; }
.layouts { padding-left: 17px; display: flex; color: #b4b8c0; font-size: 14.5px; }
.layouts span { height: 23px; line-height: 23px; background: #2f3643; text-align: center; width: 81px; border-radius: 0 0 14px 14px; }
.layouts .on { width: 74px; background: #3b4453; color: #fff; font-weight: 700; }
.layouts b { width: 27px; height: 20px; margin: 2px 0 0 5px; background: #2f3643; border-radius: 12px 4px 14px 4px; display: grid; place-items: center; }
.status { display: flex; padding: 2px 5px 0 0; height: 32px; }
.g { height: 30px; background: #3b4453; display: flex; align-items: center; flex: none; justify-content: center; }
.g b { width: 28px; height: 28px; display: grid; place-items: center; }
.g .on { background: #608bbd; }
.g1 { width: 59px; margin-right: 3px; font-size: 15px; }
.g2 { width: 80px; margin-right: 3px; justify-content: flex-start; gap: 2px; padding-left: 1px; } .g2 .caret { margin-left: 4px; }
.g3 { width: 130px; margin-right: 1px; justify-content: flex-start; gap: 2px; padding-left: 1px; } .g3 .caret { margin: 0 4px; } .g3 .caret:last-child { margin-left: 4px; }
.g4 { width: 80px; margin-right: 3px; } .g4 b:first-child { margin-left: 2px; } .g4 .caret { margin: 0 5px 0 6px; }
.g5 { width: 132px; margin-right: 3px; gap: 2px; padding-left: 1px; } .g5 span { margin-left: 5px; width: 20px; } .g5 .caret { margin-left: 0; margin-right: 4px; }
.g6 { width: 50px; margin-right: 1px; gap: 10px; } .g7 { width: 30px; margin-right: 3px; }
.g8 { width: 30px; margin-right: 3px; } .g9 { width: 34px; margin-right: 3px; } .g10 { width: 60px; gap: 10px; }

/* taskbar */
.taskbar { height: 50px; display: flex; background: linear-gradient(90deg, #223a41 0%, #213740 35%, #1d2f40 60%, #1c2a45 80%, #1a2846 100%); }
.task { width: 50px; margin-right: 12px; display: grid; place-items: center; height: 50px; }
.task:first-child { width: 60px; margin: 0; } .task:nth-child(2) { width: 60px; margin: 0; } .task:nth-child(3) { width: 68px; margin-right: 2px; }
.task:nth-child(4) { margin-right: 13px; }
.task.run { width: 51px; margin-right: 11px; border-bottom: 3px solid #75b8ee; padding-top: 3px; }
.task:nth-child(6) { margin-right: 12px; }
.task.run:nth-child(9) { margin-right: 6px; }
.task.run.active { width: 61px; margin: 0; background: linear-gradient(90deg, #50626a 56px, #36464e 56px, #36464e 57px, #46555d 57px); padding-right: 2px; }
.teamt { font: 700 14px "Open Sans", sans-serif; fill: #fff; }
.wordt { font: 700 20px "Open Sans", sans-serif; fill: #124a9e; letter-spacing: 0; }
.tray { margin-left: auto; display: grid; grid-template-columns: 37px 120px 28px 33px 26px 35px 39px 44px 69px 22px 48px 4px; align-items: center; padding-bottom: 1px; color: #fff; font-size: 15px; }
.weather { font-size: 17px; letter-spacing: .05px; padding-top: 1px; }
.clock { text-align: center; line-height: 23px; white-space: nowrap; font-size: 14.5px; letter-spacing: 0; width: 67px; }
.tray .lang { letter-spacing: -.4px; }
.tray > svg:last-of-type { margin-left: 22px; }
.peek { width: 1px; height: 50px; background: #66728a; margin-left: 42px; }
```
